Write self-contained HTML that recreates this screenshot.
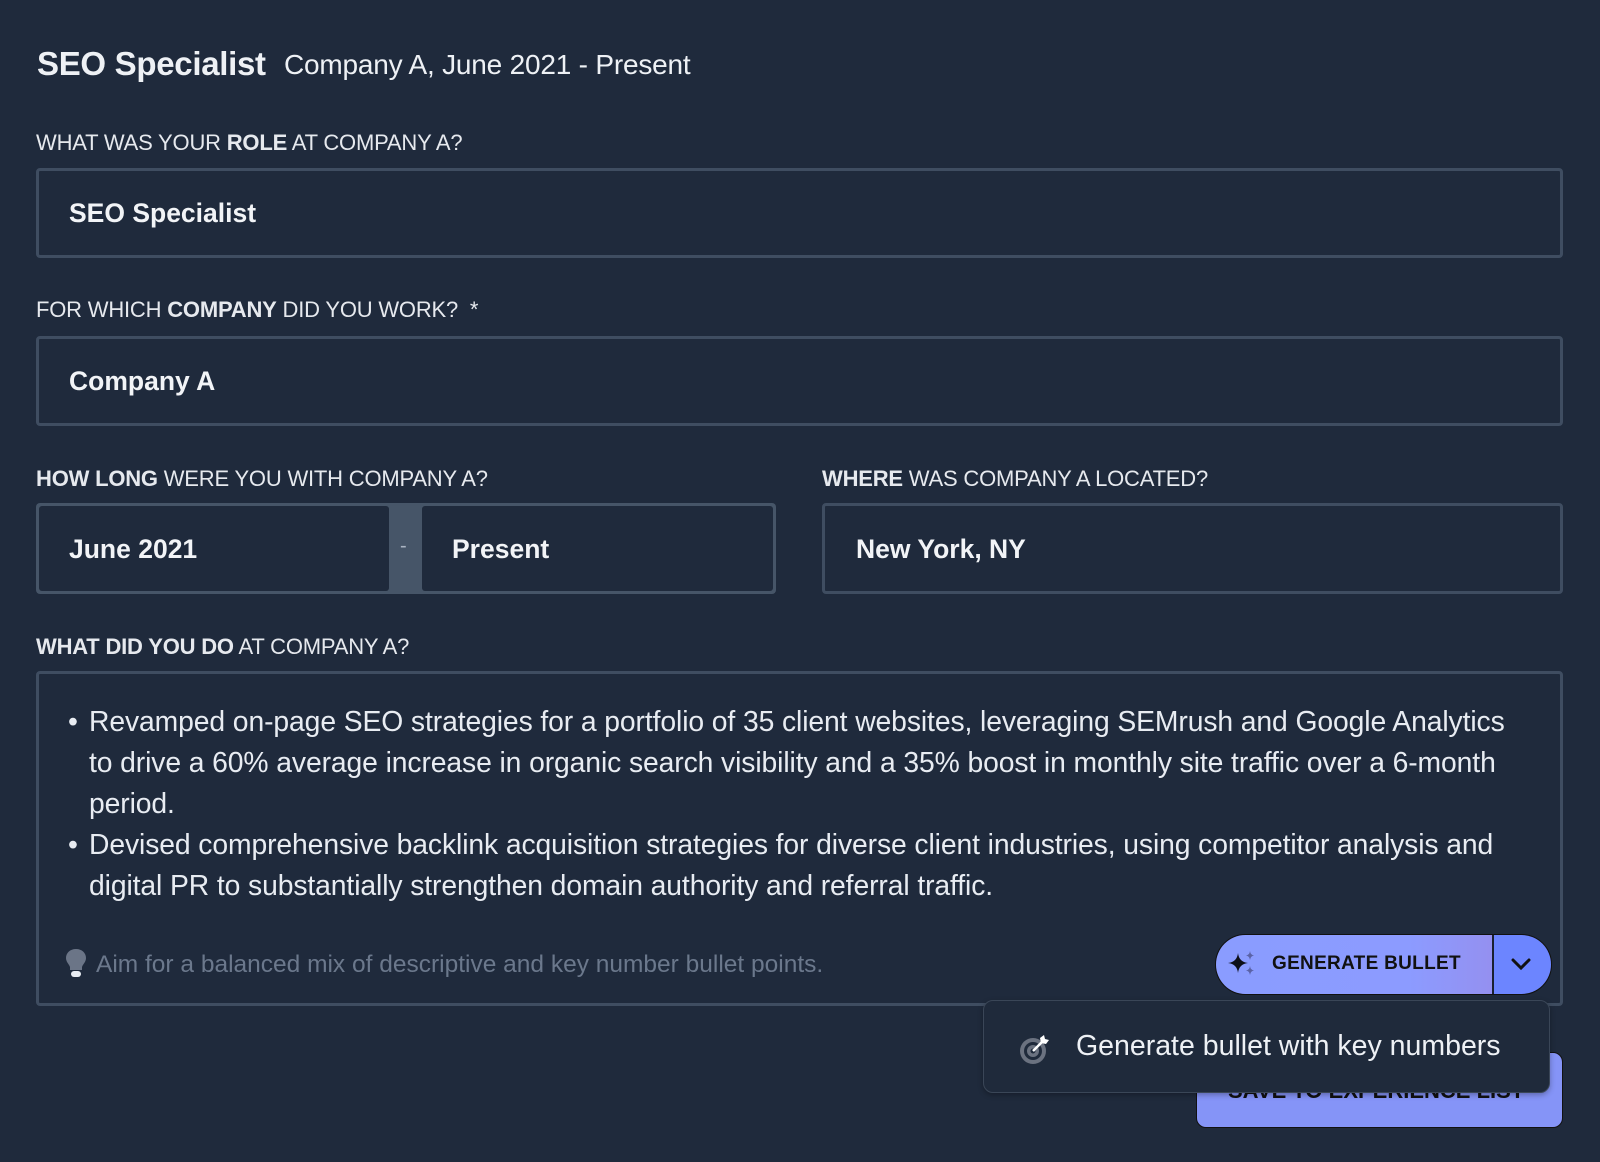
<!DOCTYPE html>
<html><head><meta charset="utf-8"><style>
*{box-sizing:border-box;margin:0;padding:0}
body{width:1600px;height:1162px;background:#1f2a3c;font-family:"Liberation Sans",sans-serif;color:#eef1f5;position:relative;overflow:hidden}
.abs{position:absolute;white-space:nowrap}
.lbl{font-size:22px;color:#e6e9ee;letter-spacing:-0.2px}
.lbl b{font-weight:700}
.inp{position:absolute;border:3px solid #3f4d61;border-radius:4px;background:#1f2a3c}
.val{position:absolute;font-size:26.5px;font-weight:700;color:#f2f4f7;white-space:nowrap}
.btxt{font-size:28.3px;color:#e8ecf2;line-height:41px;letter-spacing:-0.1px}
</style></head><body>
<div class="abs" style="left:37px;top:45px;font-size:33px;font-weight:700;letter-spacing:-0.3px">SEO Specialist</div>
<div class="abs" style="left:284px;top:49px;font-size:28px;letter-spacing:-0.2px">Company A, June 2021 - Present</div>

<div class="abs lbl" style="left:36px;top:130px">WHAT WAS YOUR <b>ROLE</b> AT COMPANY A?</div>
<div class="inp" style="left:36px;top:168px;width:1527px;height:90px"></div>
<div class="val" style="left:69px;top:198px">SEO Specialist</div>

<div class="abs lbl" style="left:36px;top:297px">FOR WHICH <b>COMPANY</b> DID YOU WORK? &nbsp;*</div>
<div class="inp" style="left:36px;top:336px;width:1527px;height:90px"></div>
<div class="val" style="left:69px;top:366px">Company A</div>

<div class="abs lbl" style="left:36px;top:466px"><b>HOW LONG</b> WERE YOU WITH COMPANY A?</div>
<div class="abs lbl" style="left:822px;top:466px"><b>WHERE</b> WAS COMPANY A LOCATED?</div>
<div style="position:absolute;left:36px;top:503px;width:740px;height:91px;background:#465568;border-radius:4px"></div>
<div style="position:absolute;left:39px;top:506px;width:350px;height:85px;background:#1f2a3c;border-radius:3px"></div>
<div style="position:absolute;left:422px;top:506px;width:351px;height:85px;background:#1f2a3c;border-radius:3px"></div>
<div class="abs" style="left:400px;top:535px;font-size:20px;color:#aab4c2">-</div>
<div class="val" style="left:69px;top:534px">June 2021</div>
<div class="val" style="left:452px;top:534px">Present</div>
<div class="inp" style="left:822px;top:503px;width:741px;height:91px"></div>
<div class="val" style="left:856px;top:534px">New York, NY</div>

<div class="abs lbl" style="left:36px;top:634px"><b>WHAT DID YOU DO</b> AT COMPANY A?</div>
<div class="inp" style="left:36px;top:671px;width:1527px;height:335px"></div>
<div class="abs btxt" style="left:68px;top:701px">•</div>
<div class="abs btxt" style="left:68px;top:824px">•</div>
<div class="abs btxt" style="left:89px;top:701px">Revamped on-page SEO strategies for a portfolio of 35 client websites, leveraging SEMrush and Google Analytics<br>to drive a 60% average increase in organic search visibility and a 35% boost in monthly site traffic over a 6-month<br>period.<br>Devised comprehensive backlink acquisition strategies for diverse client industries, using competitor analysis and<br>digital PR to substantially strengthen domain authority and referral traffic.</div>

<svg class="abs" style="left:64px;top:948px" width="24" height="32" viewBox="0 0 24 32"><path d="M12 1C6 1 2 5 2 10c0 4 3 6 4 9v3h12v-3c1-3 4-5 4-9 0-5-4-9-10-9z" fill="#6b7587"/><rect x="7" y="23" width="10" height="6" rx="3" fill="#e8ecf2"/></svg>
<div class="abs" style="left:96px;top:951px;font-size:24.5px;color:#6b788c">Aim for a balanced mix of descriptive and key number bullet points.</div>

<div style="position:absolute;left:1196px;top:1052px;width:367px;height:76px;background:#8594f7;border-radius:10px;border:1px solid #111"></div>
<div class="abs" style="left:1228px;top:1078px;font-size:22px;font-weight:700;color:#111">SAVE TO EXPERIENCE LIST</div>

<div style="position:absolute;left:1215px;top:934px;width:337px;height:61px;border-radius:31px;overflow:hidden;border:1px solid #111">
<div style="position:absolute;left:0;top:0;width:276px;height:61px;background:linear-gradient(90deg,#8a9cff 0%,#8c9bff 70%,#9490f0 100%)"></div>
<div style="position:absolute;left:276px;top:0;width:2px;height:61px;background:#1a2030"></div>
<div style="position:absolute;left:278px;top:0;width:61px;height:61px;background:#6c85ff"></div>
</div>
<svg class="abs" style="left:1226px;top:950px" width="36" height="30" viewBox="0 0 36 30"><path d="M12 3Q13 12 22 13Q13 14 12 23Q11 14 2 13Q11 12 12 3z" fill="#0d0f18"/><path d="M24 1Q24.5 5 28 5.5Q24.5 6 24 10Q23.5 6 20 5.5Q23.5 5 24 1z" fill="#5a62a6"/><path d="M24 16Q24.5 20 28 20.5Q24.5 21 24 25Q23.5 21 20 20.5Q23.5 20 24 16z" fill="#5a62a6"/></svg>
<div class="abs" style="left:1272px;top:953px;font-size:19px;font-weight:700;color:#111;letter-spacing:0.3px">GENERATE BULLET</div>
<svg class="abs" style="left:1510px;top:956px" width="22" height="16" viewBox="0 0 22 16"><path d="M3 4l8 8 8-8" stroke="#111" stroke-width="3" fill="none" stroke-linecap="round"/></svg>

<div style="position:absolute;left:983px;top:1000px;width:567px;height:93px;background:#1f2a3b;border:1.5px solid #3a4657;border-radius:10px;box-shadow:0 2px 6px rgba(0,0,0,.3)"></div>
<svg class="abs" style="left:1018px;top:1033px" width="34" height="34" viewBox="0 0 34 34"><circle cx="15" cy="18" r="13" fill="#6b7280"/><circle cx="15" cy="18" r="9" fill="#1f2a3b"/><circle cx="15" cy="18" r="6" fill="#6b7280"/><circle cx="15" cy="18" r="2.5" fill="#1f2a3b"/><path d="M15 18L25 8" stroke="#fff" stroke-width="2.5"/><path d="M22 5l4-3 1 4 4 1-3 4-5-1z" fill="#fff"/></svg>
<div class="abs" style="left:1076px;top:1030px;font-size:28.5px;color:#eef1f5">Generate bullet with key numbers</div>
</body></html>
